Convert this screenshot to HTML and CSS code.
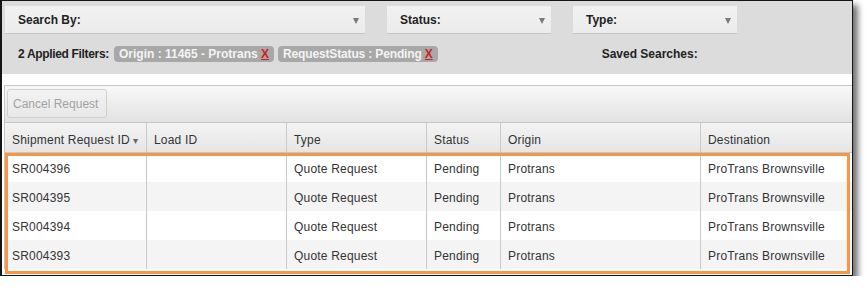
FILE: index.html
```html
<!DOCTYPE html>
<html lang="en">
<head>
  <meta charset="UTF-8">
  <title>Shipment Requests</title>
  <link rel="stylesheet" href="styles.css">
</head>
<body>
  <div class="frame">
    <div class="filters">
      <div class="selects">
        <div class="select search-by">Search By:<span class="arrow"></span></div>
        <div class="select status">Status:<span class="arrow"></span></div>
        <div class="select type">Type:<span class="arrow"></span></div>
      </div>
      <div class="applied">
        <span class="applied-label">2 Applied Filters:</span>
        <span class="chip">Origin : 11465 - Protrans <a class="remove">X</a></span>
        <span class="chip narrow">RequestStatus : Pending <a class="remove">X</a></span>
        <span class="saved">Saved Searches:</span>
      </div>
    </div>

    <div class="grid">
      <div class="toolbar">
        <button class="btn" disabled>Cancel Request</button>
      </div>
      <div class="row head">
        <div class="cell c1">Shipment Request ID <span class="sort">&#9662;</span></div>
        <div class="cell c2">Load ID</div>
        <div class="cell c3">Type</div>
        <div class="cell c4">Status</div>
        <div class="cell c5">Origin</div>
        <div class="cell c6">Destination</div>
      </div>
      <div class="row">
        <div class="cell c1">SR004396</div>
        <div class="cell c2"></div>
        <div class="cell c3">Quote Request</div>
        <div class="cell c4">Pending</div>
        <div class="cell c5">Protrans</div>
        <div class="cell c6">ProTrans Brownsville</div>
      </div>
      <div class="row alt">
        <div class="cell c1">SR004395</div>
        <div class="cell c2"></div>
        <div class="cell c3">Quote Request</div>
        <div class="cell c4">Pending</div>
        <div class="cell c5">Protrans</div>
        <div class="cell c6">ProTrans Brownsville</div>
      </div>
      <div class="row">
        <div class="cell c1">SR004394</div>
        <div class="cell c2"></div>
        <div class="cell c3">Quote Request</div>
        <div class="cell c4">Pending</div>
        <div class="cell c5">Protrans</div>
        <div class="cell c6">ProTrans Brownsville</div>
      </div>
      <div class="row alt">
        <div class="cell c1">SR004393</div>
        <div class="cell c2"></div>
        <div class="cell c3">Quote Request</div>
        <div class="cell c4">Pending</div>
        <div class="cell c5">Protrans</div>
        <div class="cell c6">ProTrans Brownsville</div>
      </div>
    </div>

    <div class="highlight"></div>
  </div>
</body>
</html>
```

FILE: styles.css
```css
body {
  margin: 0;
  background: #ffffff;
  font-family: "Liberation Sans", Arial, sans-serif;
  font-size: 12px;
  color: #333333;
}
.frame {
  position: relative;
  width: 850px;
  height: 274px;
  border: 1px solid #151515;
  border-left-width: 2px;
  box-shadow: 5px 5px 6px rgba(0, 0, 0, 0.55);
  background: #ffffff;
  overflow: hidden;
}
.filters {
  height: 73px;
  background: #dcdcdc;
  padding: 5px 0 0 3px;
  box-sizing: border-box;
}
.selects {
  display: flex;
  gap: 22px;
}
.select {
  position: relative;
  height: 28px;
  line-height: 29px;
  padding-left: 13px;
  background: linear-gradient(#f1f1f1, #ececec);
  border-bottom: 1px solid #c4c4c4;
  box-sizing: border-box;
  font-weight: bold;
  color: #222222;
}
.search-by { width: 360px; }
.status { width: 164px; }
.type { width: 164px; }
.arrow {
  position: absolute;
  right: 6px;
  top: 12px;
  border-left: 3.5px solid transparent;
  border-right: 3.5px solid transparent;
  border-top: 6px solid #7a7a7a;
}
.applied {
  display: flex;
  align-items: center;
  margin-top: 12px;
  padding-left: 13px;
  height: 16px;
}
.applied-label {
  font-weight: bold;
  color: #222222;
  letter-spacing: -0.33px;
  margin-right: 5px;
}
.chip {
  height: 16px;
  line-height: 17px;
  padding: 0 5px;
  margin-right: 4px;
  border-radius: 4px;
  background: #a8a8a8;
  color: #f4f4f4;
  font-weight: bold;
}
.chip.narrow {
  letter-spacing: -0.15px;
}
.remove {
  color: #cc1f1f;
  text-decoration: underline;
}
.saved {
  margin-left: 160px;
  font-weight: bold;
  color: #222222;
  letter-spacing: 0;
}
.grid {
  margin: 11px 0 0 2px;
  border-top: 1px solid #c6c6c6;
  border-left: 1px solid #c6c6c6;
}
.toolbar {
  height: 37px;
  padding: 3px 0 0 2px;
  box-sizing: border-box;
  background: linear-gradient(#f8f8f8, #e2e2e2);
  border-bottom: 1px solid #c6c6c6;
}
.btn {
  width: 100px;
  height: 29px;
  padding: 0 0 0 5px;
  text-align: left;
  font-family: inherit;
  font-size: 12px;
  color: #a2a2a2;
  background: linear-gradient(#f3f3f3, #e8e8e8);
  border: 1px solid #d0d0d0;
  border-radius: 3px;
}
.row {
  display: flex;
  height: 29px;
  background: #ffffff;
}
.row.alt {
  background: #f4f4f4;
}
.row.head {
  height: 29px;
  background: linear-gradient(#f3f3f3, #e6e6e6);
  border-bottom: 1px solid #c6c6c6;
}
.cell {
  line-height: 29px;
  padding: 2px 0 0 7px;
  border-right: 1px solid #c9c9c9;
  box-sizing: border-box;
  white-space: nowrap;
  letter-spacing: 0.2px;
}
.head .cell {
  padding-top: 3px;
}
.c1 { width: 142px; }
.c2 { width: 140px; }
.c3 { width: 140px; }
.c4 { width: 74px; }
.c5 { width: 200px; }
.c6 { flex: 1; border-right: none; }
.sort {
  font-size: 10px;
  color: #666666;
}
.highlight {
  position: absolute;
  left: 3px;
  top: 152px;
  width: 845px;
  height: 121px;
  border: 3px solid #f79646;
  box-sizing: border-box;
}
```
